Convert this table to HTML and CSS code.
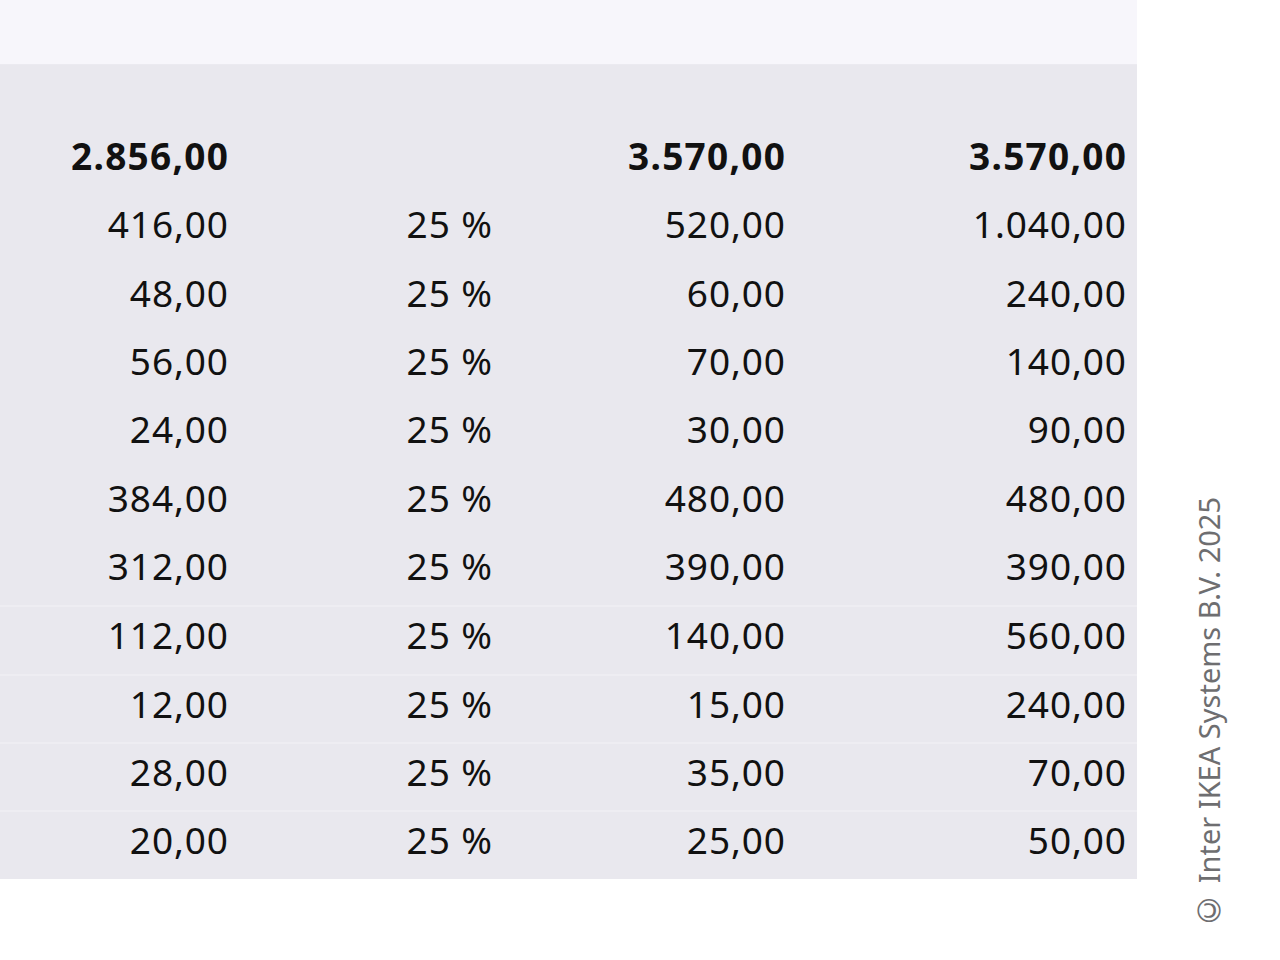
FILE: index.html
```html
<!DOCTYPE html>
<html lang="da">
<head>
<meta charset="utf-8">
<title>Prisoversigt</title>
<link rel="stylesheet" href="styles.css">
</head>
<body>
<div class="page">
  <main class="sheet">
    <div class="sheet-head"></div>
    <div class="sheet-body">
      <div class="row row-total">
        <span class="cell">2.856,00</span>
        <span class="cell"></span>
        <span class="cell">3.570,00</span>
        <span class="cell">3.570,00</span>
      </div>
      <div class="row"><span class="cell">416,00</span><span class="cell">25 %</span><span class="cell">520,00</span><span class="cell">1.040,00</span></div>
      <div class="row"><span class="cell">48,00</span><span class="cell">25 %</span><span class="cell">60,00</span><span class="cell">240,00</span></div>
      <div class="row"><span class="cell">56,00</span><span class="cell">25 %</span><span class="cell">70,00</span><span class="cell">140,00</span></div>
      <div class="row"><span class="cell">24,00</span><span class="cell">25 %</span><span class="cell">30,00</span><span class="cell">90,00</span></div>
      <div class="row"><span class="cell">384,00</span><span class="cell">25 %</span><span class="cell">480,00</span><span class="cell">480,00</span></div>
      <div class="row"><span class="cell">312,00</span><span class="cell">25 %</span><span class="cell">390,00</span><span class="cell">390,00</span></div>
      <div class="row row-sep"><span class="cell">112,00</span><span class="cell">25 %</span><span class="cell">140,00</span><span class="cell">560,00</span></div>
      <div class="row row-sep"><span class="cell">12,00</span><span class="cell">25 %</span><span class="cell">15,00</span><span class="cell">240,00</span></div>
      <div class="row row-sep"><span class="cell">28,00</span><span class="cell">25 %</span><span class="cell">35,00</span><span class="cell">70,00</span></div>
      <div class="row row-sep"><span class="cell">20,00</span><span class="cell">25 %</span><span class="cell">25,00</span><span class="cell">50,00</span></div>
    </div>
  </main>
  <aside class="side">
    <p class="copyright"><span class="copy-mark">©</span> Inter IKEA Systems B.V. 2025</p>
  </aside>
</div>
</body>
</html>
```
FILE: styles.css
```css
html, body {
  margin: 0;
  padding: 0;
  background: #ffffff;
}
body {
  font-family: "Noto Sans", "Open Sans", "Liberation Sans", sans-serif;
  color: #111111;
}
.page {
  display: flex;
  width: 1280px;
  height: 960px;
  overflow: hidden;
}
.sheet {
  width: 1137px;
  flex: none;
  align-self: flex-start;
}
.sheet-head {
  height: 64px;
  background: #f7f6fb;
  border-bottom: 1px solid #ebeaf0;
}
.sheet-body {
  background: #e9e8ee;
  padding-top: 62px;
}
.row {
  display: grid;
  grid-template-columns: 228px 264px 293px 341px;
  height: 68.33px;
  box-sizing: border-box;
  padding-right: 11px;
  padding-bottom: 10px;
  font-size: 37px;
  line-height: 58.33px;
  letter-spacing: 0.9px;
}
.row .cell {
  margin-right: -0.9px;
}
.row-sep {
  border-top: 2px solid #eeedf2;
  line-height: 56.33px;
}
.row-total {
  font-weight: 700;
  letter-spacing: 1.3px;
}
.row-total .cell {
  margin-right: -1.3px;
}
.cell {
  text-align: right;
  white-space: nowrap;
}
.side {
  flex: 1;
  display: flex;
  align-items: flex-start;
  padding-top: 497px;
  padding-left: 52px;
}
.copyright {
  margin: 0;
  writing-mode: vertical-rl;
  transform: rotate(180deg);
  font-size: 29px;
  line-height: 40px;
  color: #6e6e70;
  white-space: nowrap;
}
.copy-mark {
  font-family: "DejaVu Sans", sans-serif;
  font-size: 32px;
  line-height: 40px;
}
```
